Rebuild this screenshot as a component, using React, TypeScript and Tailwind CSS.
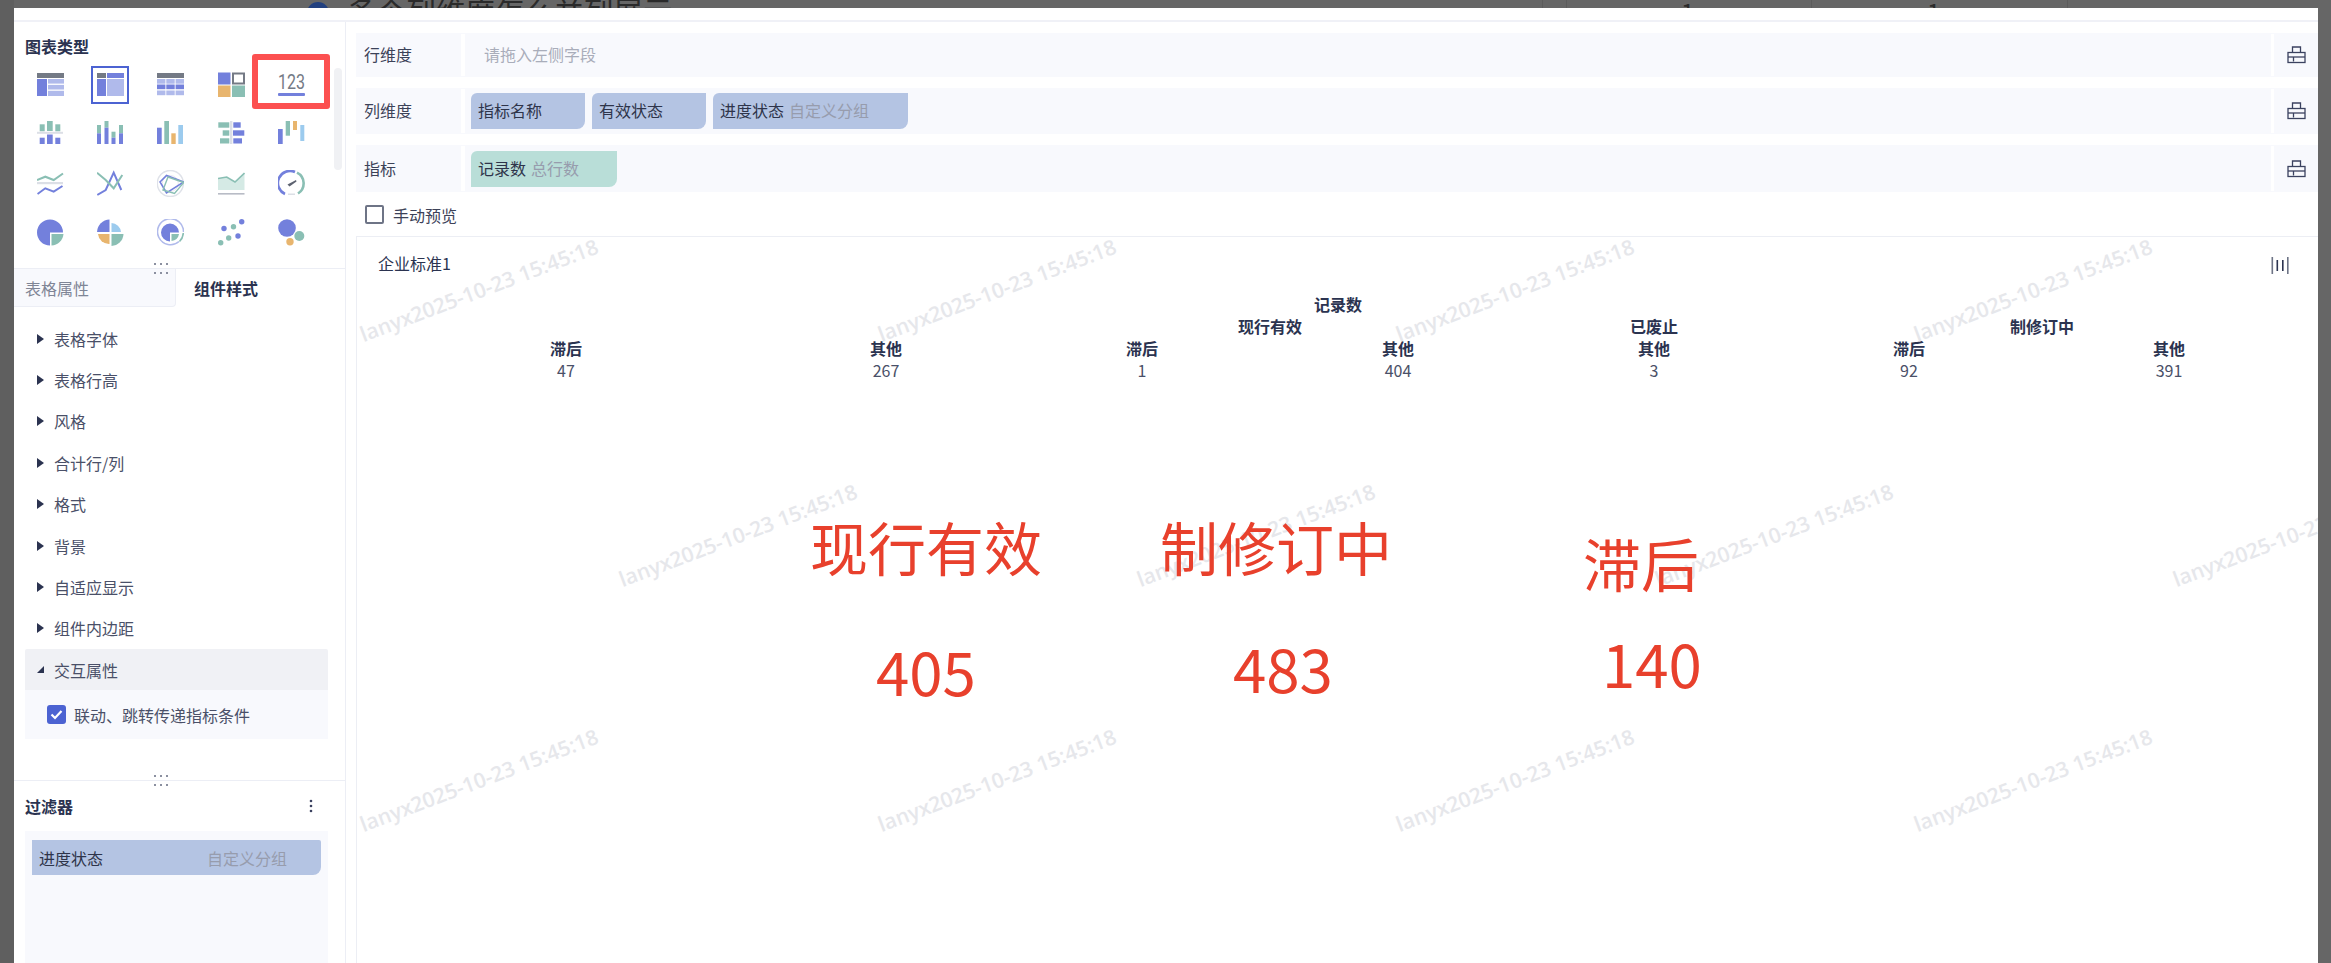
import React from "react";

const B = "#7380dc", L = "#b0baeb", G = "#747a85", T = "#8abfb4", Y = "#e8b56e", S = "#9ccbee", LG = "#dcdfe6", PT = "#d5eae5";

type R = [number, number, number, number, string];
const Bars = ({ r }: { r: R[] }) => (
  <svg width="27" height="27" viewBox="0 0 27 27">
    {r.map((a, i) => (
      <rect key={i} x={a[0]} y={a[1]} width={a[2]} height={a[3]} fill={a[4]} />
    ))}
  </svg>
);

const Svg = ({ children }: { children: React.ReactNode }) => (
  <svg width="27" height="27" viewBox="0 0 27 27" fill="none">{children}</svg>
);

const grid3: R[] = [
  [0, 2, 27, 5, G],
  ...[8, 13.5, 19.5].flatMap((y, ri) =>
    [0, 9.3, 18.6].map((x): R => [x, y, 8.4, 4.7, ri === 1 ? B : L])
  ),
];

const chartIcons: React.ReactNode[] = [
  <Bars r={[[0, 2, 27, 5, G], [0, 8, 10, 17, B], [11, 8, 16, 4.6, L], [11, 13.9, 16, 4.6, L], [11, 19.8, 16, 5.2, L]]} />,
  <Bars r={[[0, 2, 9, 5, G], [10, 2, 17, 5, B], [0, 8, 9, 17, B], [10, 8, 17, 17, L]]} />,
  <Bars r={grid3} />,
  <Svg>
    <rect x="0" y="1.5" width="12.5" height="12" fill={B} />
    <rect x="15" y="2.5" width="11" height="10" fill="#fff" stroke={G} strokeWidth="2" />
    <rect x="0" y="14.5" width="12.5" height="11.5" fill={Y} />
    <rect x="14" y="14.5" width="13" height="11.5" fill={T} />
  </Svg>,
  <Svg>
    <text x="0" y="18" fontSize="21" fontFamily="Roboto, sans-serif" fontWeight="400" fill={G} textLength="27" lengthAdjust="spacingAndGlyphs">123</text>
    <rect x="0" y="22" width="27" height="3" rx="1" fill={B} />
  </Svg>,
  <Bars r={[[2.7, 4.3, 5, 7, T], [10, 1, 5.7, 10, T], [18.3, 4.3, 5, 7, T], [0, 11.8, 26, 2, LG], [2.7, 17.7, 5, 6.3, B], [10, 14.5, 5.7, 9.5, B], [18.3, 17.7, 5, 6.3, B]]} />,
  <Bars r={[[0, 5, 4, 8.3, T], [0, 13.3, 4, 10.7, B], [7.5, 1, 4, 6.7, T], [7.5, 7.7, 4, 16.3, B], [14.5, 11.7, 4, 6, T], [14.5, 17.7, 4, 6.3, B], [22, 5, 4, 8.3, T], [22, 13.3, 4, 10.7, B]]} />,
  <Bars r={[[0, 7.7, 4.7, 16.3, B], [7.3, 1, 4.7, 23, T], [14.3, 13.3, 4.4, 10.7, Y], [21.3, 5, 4.7, 19, S]]} />,
  <Bars r={[[0.3, 2.3, 11, 5.4, T], [4.7, 10.3, 6.6, 5.4, T], [2, 18.3, 9.3, 5.2, T], [12, 1, 2.4, 23, LG], [15.3, 2.3, 7.4, 5.4, B], [15, 10.3, 11.3, 5.4, B], [15.3, 18.3, 8.7, 5.2, B]]} />,
  <Bars r={[[0, 9, 4.7, 15, B], [7.7, 1, 4.3, 14.7, T], [15, 1, 4, 9, Y], [22.3, 5, 4, 16, S]]} />,
  <Svg>
    <polyline points="0,10 8.3,6.7 16.7,10 26,3.5" stroke={T} strokeWidth="2" />
    <rect x="0" y="12" width="26" height="2.2" fill={LG} />
    <polyline points="0.5,24 8.3,18.3 16.7,21.7 25.5,16" stroke={B} strokeWidth="2" />
  </Svg>,
  <Svg>
    <polyline points="0.3,25 8.7,20 16.7,2.7 24.3,20" stroke={B} strokeWidth="2" />
    <polyline points="0,2.7 8.7,10 16.7,18.3 25.3,5" stroke={T} strokeWidth="2" />
  </Svg>,
  <Svg>
    <circle cx="13.3" cy="13.5" r="13" stroke="#dfe2e9" strokeWidth="1.5" />
    <circle cx="13.3" cy="13.5" r="8" stroke="#e6e8ee" strokeWidth="1" />
    <polygon points="3,12 9.5,5.5 26.8,12 9.5,23" stroke={B} strokeWidth="1.6" />
    <polygon points="11,7 26.8,12.5 17.5,23.5 6,20" stroke={T} strokeWidth="1.4" />
  </Svg>,
  <Svg>
    <polygon points="0,8.5 8.7,7 17,12 26.5,3 26.5,20 0,20" fill={PT} />
    <polyline points="0,8.5 8.7,7 17,12 26.5,3" stroke={T} strokeWidth="1.6" />
    <rect x="0" y="23" width="26.5" height="1.6" fill="#b8bcc6" />
  </Svg>,
  <Svg>
    <path d="M7 24 A12 12 0 0 1 17 2 " stroke={B} strokeWidth="2.6" />
    <path d="M19 2.6 A12 12 0 0 1 20 23.5" stroke={T} strokeWidth="2.6" />
    <polygon points="9.5,14.5 18,10 18.5,11.5 11.5,16.5" fill="#5d6270" />
    <rect x="10" y="23.5" width="7" height="1.5" fill={LG} />
  </Svg>,
  <Svg>
    <path d="M13 13.5 L26 13.5 A13 13 0 1 0 13 26.5 Z" fill={B} />
    <path d="M14.5 15 L26.5 15 A12.5 12.5 0 0 1 14.5 26.5 Z" fill={T} />
  </Svg>,
  <Svg>
    <path d="M12.5 0.5 A13 13 0 0 0 0 13 L12.5 13 Z" fill={B} />
    <path d="M14.5 4 A10 10 0 0 1 24 13 L14.5 13 Z" fill={S} />
    <path d="M12.5 15 L12.5 25 A11 11 0 0 1 1 15 Z" fill={Y} />
    <path d="M14.5 15 L26.5 15 A12.5 12.5 0 0 1 14.5 27 Z" fill={T} />
  </Svg>,
  <Svg>
    <path d="M22 22.5 A13 13 0 1 1 26.5 13" stroke={L} strokeWidth="1.6" />
    <path d="M26.3 14 A13 13 0 0 1 22.5 22.5" stroke={T} strokeWidth="1.6" />
    <path d="M13 13.5 L22 13.5 A9 9 0 1 0 13 22.5 Z" fill={B} />
    <path d="M14.5 15 L22 15 A8.5 8.5 0 0 1 14.5 22 Z" fill={T} />
    <circle cx="13" cy="13.5" r="10.5" stroke="#fff" strokeWidth="0.5" />
  </Svg>,
  <Svg>
    <circle cx="6" cy="9.5" r="2.7" fill={B} />
    <circle cx="23.7" cy="2.8" r="2.7" fill={B} />
    <circle cx="20" cy="17" r="2.7" fill={B} />
    <circle cx="15.5" cy="7.8" r="2.7" fill={T} />
    <circle cx="10.7" cy="19" r="2.7" fill={T} />
    <circle cx="2.7" cy="23.7" r="2.7" fill={T} />
  </Svg>,
  <Svg>
    <circle cx="9" cy="9" r="8.8" fill={B} />
    <circle cx="21.3" cy="17" r="5" fill={T} />
    <circle cx="12" cy="22.7" r="3.7" fill={Y} />
  </Svg>,
];

const ToolIcon = () => (
  <svg width="19" height="18" viewBox="0 0 19 18" fill="none" stroke="#3b4260" strokeWidth="1.3">
    <rect x="1" y="6.5" width="17" height="10" />
    <path d="M5.5 6.5 V1 H13.5 V6.5" />
    <path d="M1 11 H18" />
    <path d="M6.5 11 V15.5" />
  </svg>
);

const Dots = ({ className }: { className: string }) => (
  <div className={"absolute grid grid-cols-3 gap-x-[4px] gap-y-[7px] " + className}>
    {[0, 1, 2, 3, 4, 5].map((i) => (
      <span key={i} className="h-[2px] w-[2px] bg-[#8b90a0]" />
    ))}
  </div>
);

const Arrow = () => (
  <svg width="7" height="10" viewBox="0 0 7 10" className="shrink-0">
    <polygon points="0,0 7,5 0,10" fill="#2b3350" />
  </svg>
);

const Chip = ({ name, sub, color, w }: { name: string; sub?: string; color: string; w: string }) => (
  <div className={`flex h-[36px] items-center gap-[5px] rounded-tl-[6px] rounded-br-[8px] pb-[2px] pl-[7px] ${color} ${w}`}>
    <span className="text-[#2e344a]">{name}</span>
    {sub && <span className="text-[#979cad]">{sub}</span>}
  </div>
);

const FieldRow = ({ label, h, children }: { label: string; h: string; children: React.ReactNode }) => (
  <div className={`flex bg-[#f8f9fd] ${h}`}>
    <div className="flex w-[105px] items-center pb-[2px] pl-[8px] text-[#3c4258]">{label}</div>
    <div className="my-[1px] w-[4px] bg-white" />
    <div className="flex flex-1 items-center gap-[7px] pl-[6px]">{children}</div>
    <div className="my-[1px] w-[3px] bg-white" />
    <div className="flex w-[44px] items-center justify-center"><ToolIcon /></div>
  </div>
);

const styleItems = ["表格字体", "表格行高", "风格", "合计行/列", "格式", "背景", "自适应显示", "组件内边距"];

const watermarks = [
  "left-[122px] top-[53px]", "left-[640px] top-[53px]", "left-[1158px] top-[53px]", "left-[1676px] top-[53px]",
  "left-[381px] top-[298px]", "left-[899px] top-[298px]", "left-[1417px] top-[298px]", "left-[1935px] top-[298px]",
  "left-[122px] top-[543px]", "left-[640px] top-[543px]", "left-[1158px] top-[543px]", "left-[1676px] top-[543px]",
];

const Th = ({ children, className = "" }: { children?: React.ReactNode; className?: string }) => (
  <div className={`text-center font-bold text-[#2b3350] ${className}`}>{children}</div>
);

const annotations = [
  { t: "现行有效", c: "left-[810px] top-[512px] text-[58px]" },
  { t: "制修订中", c: "left-[1160px] top-[512px] text-[58px]" },
  { t: "滞后", c: "left-[1583px] top-[528px] text-[58px]" },
  { t: "405", c: "left-[876px] top-[636px] text-[60px]" },
  { t: "483", c: "left-[1233px] top-[633px] text-[60px]" },
  { t: "140", c: "left-[1602px] top-[628px] text-[60px]" },
];

export default function App() {
  return (
    <div className="relative h-[963px] w-[2331px] overflow-hidden bg-[#666666] font-['Noto_Sans_CJK_SC',sans-serif] text-[16px] leading-[22px]">
      {/* page behind the dialog, cut off by its top edge */}
      <div className="absolute left-0 top-0 h-[8px] w-full overflow-hidden">
        <div className="absolute left-[307px] top-[2px] h-[22px] w-[22px] rounded-full bg-[#22407f]" />
        <div className="absolute left-[347px] top-[-7px] whitespace-nowrap text-[29.6px] leading-[36px] text-[#2a2a2a]">多个列维度怎么并列展示</div>
        <div className="absolute left-[1542px] top-0 h-[8px] w-px bg-[#5c5c5c]" />
        <div className="absolute left-[1566px] top-0 h-[8px] w-px bg-[#5c5c5c]" />
        <div className="absolute left-[1811px] top-0 h-[8px] w-px bg-[#5c5c5c]" />
        <div className="absolute left-[2067px] top-0 h-[8px] w-px bg-[#5c5c5c]" />
        <div className="absolute left-[1681px] top-[-4px] text-[24px] leading-[30px] text-[#2a2a2a]">1</div>
        <div className="absolute left-[1927px] top-[-4px] text-[24px] leading-[30px] text-[#2a2a2a]">1</div>
      </div>

      <div className="absolute left-0 top-0 h-full w-[14px] bg-[#5f5f5f]" />

      <div className="relative ml-[14px] mt-[8px] flex h-[955px] w-[2304px] flex-col bg-white">
        <div className="h-[14px] shrink-0 border-b-2 border-[#f0f1f7]" />
        <div className="flex min-h-0 flex-1">
          {/* left panel */}
          <aside className="flex w-[332px] shrink-0 flex-col border-r border-[#eceef5]">
            <section className="relative h-[247px] shrink-0 border-b border-[#eceef5]">
              <div className="ml-[11px] mt-[12px] h-[26px] font-bold leading-[24px] text-[#2b3350]">图表类型</div>
              <div className="ml-[6px] grid grid-cols-[repeat(5,60.3px)] auto-rows-[49.3px]">
                {chartIcons.map((ic, i) => (
                  <div key={i} className="flex items-center justify-center">
                    {i === 1 ? (
                      <div className="flex h-[38px] w-[38px] items-center justify-center border-2 border-[#4c63d2]">{ic}</div>
                    ) : ic}
                  </div>
                ))}
              </div>
              <div className="absolute left-[320px] top-[46px] h-[102px] w-[8px] rounded-full bg-[#f0f1f4]" />
              <div className="absolute left-[238px] top-[32px] h-[55px] w-[78px] rounded-[3px] border-[6px] border-[#fc5050]" />
              <Dots className="left-[140px] top-[241px]" />
            </section>

            <div className="flex h-[38px] shrink-0">
              <div className="flex w-[162px] items-center rounded-br-[4px] border-b border-r border-[#eceef5] bg-[#f8f9fd] pl-[11px] text-[#7f8596]">表格属性</div>
              <div className="flex flex-1 items-center pl-[18px] font-bold text-[#2b3350]">组件样式</div>
            </div>

            <div className="ml-[11px] mt-[11px] flex h-[462px] w-[303px] shrink-0 flex-col">
              {styleItems.map((s) => (
                <div key={s} className="flex h-[41.4px] shrink-0 items-center gap-[10px] pl-[12px] text-[#4a5068]">
                  <Arrow />
                  <span>{s}</span>
                </div>
              ))}
              <div className="flex h-[41px] shrink-0 items-center gap-[10px] rounded-t-[2px] bg-[#f0f1f5] pl-[12px] text-[#4a5068]">
                <svg width="7" height="7" viewBox="0 0 7 7" className="shrink-0"><polygon points="7,0 7,7 0,7" fill="#2b3350" /></svg>
                <span>交互属性</span>
              </div>
              <div className="flex h-[49px] shrink-0 items-center gap-[8px] bg-[#f8f9fd] pl-[22px] text-[#4a5068]">
                <div className="flex h-[19px] w-[19px] items-center justify-center rounded-[3px] bg-[#4c63d2]">
                  <svg width="13" height="11" viewBox="0 0 13 11" fill="none"><polyline points="1.5,5.5 5,9 11.5,2" stroke="#fff" strokeWidth="2.2" /></svg>
                </div>
                <span>联动、跳转传递指标条件</span>
              </div>
            </div>

            <section className="relative flex min-h-0 flex-1 flex-col border-t border-[#eceef5]">
              <Dots className="left-[140px] top-[-6px]" />
              <div className="flex h-[50px] shrink-0 items-center justify-between pl-[11px] pr-[32px]">
                <span className="font-bold text-[#2b3350]">过滤器</span>
                <svg width="4" height="14" viewBox="0 0 4 14"><circle cx="2" cy="2" r="1.3" fill="#3b4260" /><circle cx="2" cy="7" r="1.3" fill="#3b4260" /><circle cx="2" cy="12" r="1.3" fill="#3b4260" /></svg>
              </div>
              <div className="ml-[11px] w-[303px] flex-1 bg-[#f8f9fd] px-[7px] pt-[9px]">
                <div className="flex h-[35px] items-center justify-between rounded-tr-[2px] rounded-br-[8px] bg-[#b4c4e3] pl-[7px] pr-[34px]">
                  <span className="text-[#2e344a]">进度状态</span>
                  <span className="text-[#979cad]">自定义分组</span>
                </div>
              </div>
            </section>
          </aside>

          {/* right panel */}
          <main className="flex min-w-0 flex-1 flex-col pl-[10px] pt-[11px]">
            <div className="flex shrink-0 flex-col gap-[11px]">
              <FieldRow label="行维度" h="h-[44px]">
                <span className="mb-[2px] pl-[13px] text-[#a9adba]">请拖入左侧字段</span>
              </FieldRow>
              <FieldRow label="列维度" h="h-[46px]">
                <Chip name="指标名称" color="bg-[#b4c4e3]" w="w-[114px]" />
                <Chip name="有效状态" color="bg-[#b4c4e3]" w="w-[114px]" />
                <Chip name="进度状态" sub="自定义分组" color="bg-[#b4c4e3]" w="w-[195px]" />
              </FieldRow>
              <FieldRow label="指标" h="h-[47px]">
                <Chip name="记录数" sub="总行数" color="bg-[#b9ded8]" w="w-[146px]" />
              </FieldRow>
            </div>

            <div className="flex h-[44px] shrink-0 items-center gap-[9px] pl-[9px] text-[#3c4258]">
              <div className="h-[19px] w-[19px] rounded-[2px] border-2 border-[#6e7486] bg-white" />
              <span className="mt-[2px]">手动预览</span>
            </div>

            <div className="relative min-h-0 flex-1 overflow-hidden border-l border-t border-[#eceef4]">
              <div className="relative">
                <div className="mb-[4px] flex h-[52px] items-center justify-between pl-[21px] pr-[29px] text-[#2b3350]">
                  <span>企业标准1</span>
                  <svg width="18" height="17" viewBox="0 0 18 17" className="mt-[4px]">
                    <rect x="0.5" y="0" width="1.6" height="17" fill="#6e7486" />
                    <rect x="5.5" y="3" width="1.6" height="11" fill="#2b3350" />
                    <rect x="11" y="3" width="1.6" height="11" fill="#2b3350" />
                    <rect x="16" y="0" width="1.6" height="17" fill="#6e7486" />
                  </svg>
                </div>

                <div className="ml-[17px] grid w-[1928px] grid-cols-[384px_256px_256px_256px_256px_254px_266px]">
                  <Th className="col-span-7">记录数</Th>
                  <Th className="col-span-2" />
                  <Th className="col-span-2">现行有效</Th>
                  <Th>已废止</Th>
                  <Th className="col-span-2">制修订中</Th>
                  {["滞后", "其他", "滞后", "其他", "其他", "滞后", "其他"].map((h, i) => (
                    <Th key={i}>{h}</Th>
                  ))}
                  {["47", "267", "1", "404", "3", "92", "391"].map((v, i) => (
                    <div key={i} className="text-center text-[#4a5068]">{v}</div>
                  ))}
                </div>
              </div>

              {watermarks.map((c) => (
                <div key={c} className={`pointer-events-none absolute -translate-x-1/2 -translate-y-1/2 rotate-[-20.7deg] whitespace-nowrap font-['Open_Sans',sans-serif] text-[21px] font-semibold leading-[24px] text-[#e6e7eb] ${c}`}>
                  lanyx2025-10-23 15:45:18
                </div>
              ))}
            </div>
          </main>
        </div>
      </div>

      {/* hand-written red annotations over the screenshot */}
      {annotations.map((a) => (
        <div key={a.t} className={`absolute whitespace-nowrap leading-[68px] text-[#e8402c] ${a.c}`}>{a.t}</div>
      ))}
    </div>
  );
}
